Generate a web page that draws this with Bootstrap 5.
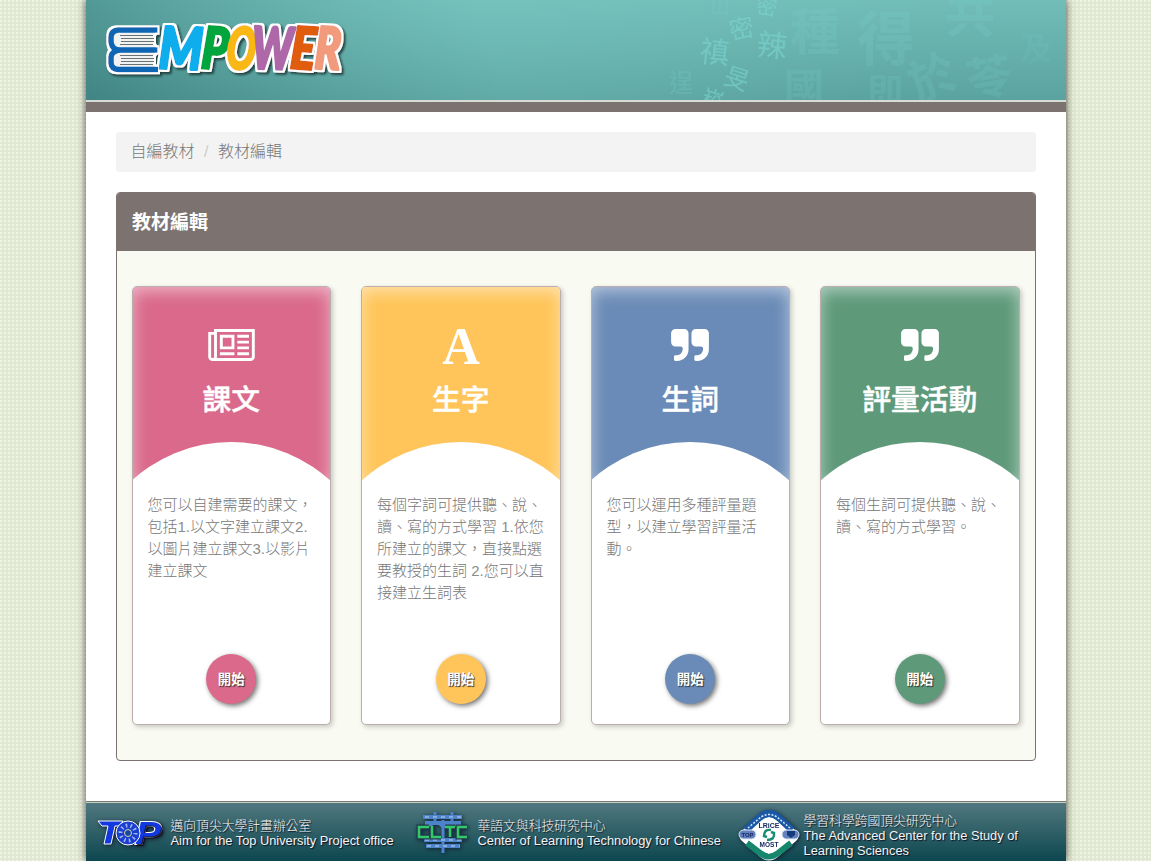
<!DOCTYPE html>
<html lang="zh-Hant">
<head>
<meta charset="utf-8">
<meta name="viewport" content="width=device-width, initial-scale=1">
<title>EMPOWER 教材編輯</title>
<link href="https://cdn.jsdelivr.net/npm/bootstrap@5.3.0/dist/css/bootstrap.min.css" rel="stylesheet">
<style>
body{font-family:"Liberation Sans","Noto Sans CJK TC",sans-serif;font-size:15px;line-height:22px;color:#777;overflow:hidden;
 background:conic-gradient(from 0deg at 2px 2px,#e0e8d2 0 75%,#f0f4e7 0) 0 0/4px 4px}
.page{width:980px;height:861px;background:#fff;box-shadow:0 0 8px rgba(60,55,45,.9)}
.top-banner{height:112px;border-bottom:10px solid #7c7371;background:#d6dcd6}
.banner-art{height:100px;background:radial-gradient(ellipse 480px 190px at 370px -10px,rgba(120,198,192,.5),transparent),linear-gradient(75deg,rgba(35,100,100,.5),transparent 42%),linear-gradient(#72bdb8,#5ba3a0)}
.banner-art svg{display:block}
.logo-letters text{font-family:Lato,"Liberation Sans",sans-serif;font-weight:900;font-style:italic;font-size:58px;stroke-width:3px;stroke-linejoin:round}
.ink text{font-family:"Noto Sans CJK TC",sans-serif;fill:#7edcd8}
.breadcrumb{height:40px;background:#f3f3f3;border-radius:4px;padding:8px 15px;font-size:16px;line-height:24px;font-weight:300;margin-bottom:20px;--bs-breadcrumb-divider-color:#ccc;--bs-breadcrumb-item-padding-x:9.5px;--bs-breadcrumb-item-active-color:#777}
.breadcrumb-item a{color:#777}
.editor{height:569px;border:1px solid #7c7371;border-radius:4px;background:#f9faf1;overflow:hidden}
.editor-title{height:58px;background:#7c7371;color:#fff;font-size:19px;font-weight:700;line-height:60px;padding-left:15.5px}
.tile-col{padding:0 15px}
.tiles{padding-top:35px}
.tile{height:439px;border:1px solid #bcaeae;border-radius:5px;background:#fff;box-shadow:2px 2px 5px rgba(0,0,0,.2);overflow:hidden}
.tile-top{height:194px;position:relative;overflow:hidden;background:var(--tone);color:#fff;box-shadow:inset 0 4px 16px rgba(255,255,255,.52);padding-top:42px}
.tile-top::after{content:"";position:absolute;left:50%;top:155px;width:294px;height:294px;margin-left:-147px;border-radius:50%;background:#fff}
.tile-top svg{display:block;margin:0 auto;height:32px}
.tile-top h3{font-size:28.8px;font-weight:500;line-height:40px;margin:19px 0 0;-webkit-text-stroke:.4px #fff}
.tile p{height:158px;margin:0;padding:13px 14px 0 15px;font-weight:300;color:#777;line-height:22px;word-break:break-all;text-align:left}
.tile p i{font-style:normal;color:#8c8c8c}
.btn-start{width:50px;height:50px;border-radius:50%;background:var(--tone);color:#fff;font-size:13.5px;line-height:51px;font-weight:700;padding:0;border:0;text-shadow:1px 1px 1px #333;box-shadow:2px 2px 5px rgba(0,0,0,.55);margin-top:15px}
.pink{--tone:#da698b}.gold{--tone:#ffc55a}.blue{--tone:#6a8bb7}.green{--tone:#5e9a7a}
.foot{height:60px;border-top:1px solid #77796e;background:linear-gradient(#527880,#0d474f);box-shadow:inset 0 1px #c9cfc5;color:#f4f4f4;font-size:12.82px;line-height:15px;text-shadow:1px 1px 1px #112}
.foot svg{filter:drop-shadow(1px 1px 2px #123);flex:none}
.foot .f1{width:319px;padding-left:11px;padding-top:2px}.foot .f2{width:333px;padding-left:11px;padding-top:2px}.foot .f3{padding-top:8px}
.foot span{display:block;font-size:12.8px;font-weight:300}
</style>
</head>
<body>
<div class="page mx-auto d-flex flex-column">
<header class="top-banner"><div class="banner-art">
<svg width="980" height="100" viewBox="86 0 980 100">
<defs><filter id="sh" x="-10%" y="-15%" width="125%" height="140%"><feMorphology in="SourceAlpha" operator="dilate" radius="1.6" result="fat"/><feGaussianBlur in="fat" stdDeviation=".4" result="edge"/><feFlood flood-color="#fff"/><feComposite in2="edge" operator="in" result="rim"/><feMerge result="all"><feMergeNode in="rim"/><feMergeNode in="SourceGraphic"/></feMerge><feDropShadow in="all" dx="2" dy="2" stdDeviation="1.3" flood-color="#122" flood-opacity=".75"/></filter></defs>
<g class="ink">
<g opacity=".5"><text x="756" y="14" font-size="21" transform="rotate(8 765 8)">密</text><text x="729" y="38" font-size="25" transform="rotate(-12 740 28)">密</text><text x="757" y="56" font-size="30" transform="rotate(6 770 45)">辣</text><text x="700" y="63" font-size="30" transform="rotate(6 715 50)">禛</text><text x="724" y="88" font-size="25" transform="rotate(18 738 80)">旻</text><text x="703" y="106" font-size="22" transform="rotate(18 710 95)">崧</text><text x="669" y="92" font-size="25" opacity=".4">逞</text></g>
<g opacity=".15" font-weight="700"><text x="790" y="50" font-size="50">種</text><text x="857" y="60" font-size="58">得</text><text x="945" y="32" font-size="50">共</text><text x="784" y="102" font-size="40">國</text><text x="867" y="105" font-size="36">即</text><text x="910" y="94" font-size="48" transform="rotate(-24 935 80)">於</text><text x="966" y="94" font-size="46" transform="rotate(-10 990 75)">苓</text><text x="1020" y="60" font-size="32" opacity=".6">及</text><text x="710" y="14" font-size="20">山</text></g>
</g>
<g filter="url(#sh)">
<path d="M157 29H118Q110 30 110 38V43L114 50L110 57V64Q111 71 118 71H157L153 64V56L157 50L153 44V36Z" fill="#f1f3f3"/>
<path d="M120 35.500H153M121 38.500H154M121 41.500H154M120 44.500H153M120 55.500H153M121 58.500H154M121 61.500H154M120 64.500H153" stroke="#6a7173" stroke-width="1.100"/>
<path d="M157.500 30H118Q111 31 111 37V42Q112 50 120 50H157.500M120 50Q111.500 51 111 57V63Q111.500 69.500 119 69.500H158" fill="none" stroke="#0865b4" stroke-width="5.500"/>
<g class="logo-letters">
<text x="159" y="69" textLength="44" lengthAdjust="spacingAndGlyphs" fill="#0daeeb" stroke="#0daeeb" transform="rotate(2 180 48)">M</text>
<text x="202" y="69" textLength="27" lengthAdjust="spacingAndGlyphs" fill="#00a63e" stroke="#00a63e" transform="rotate(4 215 48)">P</text>
<text x="227" y="69" textLength="29" lengthAdjust="spacingAndGlyphs" fill="#f9b812" stroke="#f9b812" transform="rotate(5 241 48)">O</text>
<text x="252" y="69" textLength="41" lengthAdjust="spacingAndGlyphs" fill="#ae68a9" stroke="#ae68a9" transform="rotate(2 273 48)">W</text>
<text x="291" y="69" textLength="25" lengthAdjust="spacingAndGlyphs" fill="#e05d0c" stroke="#e05d0c" transform="rotate(4 304 48)">E</text>
<text x="315" y="69" textLength="26" lengthAdjust="spacingAndGlyphs" fill="#f29a7b" stroke="#f29a7b" transform="rotate(3 330 48)">R</text>
</g></g>
</svg></div></header>
<main class="flex-grow-1" style="padding:20px 30px 0">
<nav><ol class="breadcrumb"><li class="breadcrumb-item"><a class="text-decoration-none" href="#">自編教材</a></li><li class="breadcrumb-item active">教材編輯</li></ol></nav>
<section class="editor">
<h2 class="editor-title m-0">教材編輯</h2>
<div class="row gx-0 tiles">
<div class="col-3 tile-col"><article class="tile pink text-center"><div class="tile-top"><svg viewBox="0 128 2048 1408" width="47"><path fill="#fff" fill-rule="evenodd" d="M1024 512H640v384h384V512zm128 640v128H512v-128h640zm0-768v640H512V384h640zm640 768v128h-512v-128h512zm0-256v128h-512V896h512zm0-256v128h-512V640h512zm0-256v128h-512V384h512zM256 1344V384H128v960q0 26 19 45t45 19 45-19 19-45zm1664 0V256H384v1088q0 33-11 64h1483q26 0 45-19t19-45zm128-1216v1216q0 80-56 136t-136 56H192q-80 0-136-56T0 1344V256h256V128z"/></svg><h3>課文</h3></div><p>您可以自建需要的課文，包括<i>1.</i>以文字建立課文<i>2.</i>以圖片建立課文<i>3.</i>以影片建立課文</p><button class="btn-start">開始</button></article></div>
<div class="col-3 tile-col"><article class="tile gold text-center"><div class="tile-top"><svg viewBox="0 0 40 32" width="40" overflow="visible"><text x="20" y="35" text-anchor="middle" fill="#fff" font-family="Liberation Serif,serif" font-weight="700" font-size="52">A</text></svg><h3>生字</h3></div><p>每個字詞可提供聽、說、讀、寫的方式學習 <i>1.</i>依您所建立的課文，直接點選要教授的生詞 <i>2.</i>您可以直接建立生詞表</p><button class="btn-start">開始</button></article></div>
<div class="col-3 tile-col"><article class="tile blue text-center"><div class="tile-top"><svg viewBox="0 128 1664 1408" width="38"><path id="quote" fill="#fff" d="M768 320v704q0 104-40.500 198.500T618 1386t-163.500 109.500T256 1536h-64q-26 0-45-19t-19-45v-128q0-26 19-45t45-19h64q106 0 181-75t75-181v-32q0-40-28-68t-68-28H192q-80 0-136-56T0 704V320q0-80 56-136t136-56h384q80 0 136 56t56 136zM1664 320v704q0 104-40.500 198.500T1514 1386t-163.500 109.500T1152 1536h-64q-26 0-45-19t-19-45v-128q0-26 19-45t45-19h64q106 0 181-75t75-181v-32q0-40-28-68t-68-28h-224q-80 0-136-56t-56-136V320q0-80 56-136t136-56h384q80 0 136 56t56 136z"/></svg><h3>生詞</h3></div><p>您可以運用多種評量題型，以建立學習評量活動。</p><button class="btn-start">開始</button></article></div>
<div class="col-3 tile-col"><article class="tile green text-center"><div class="tile-top"><svg viewBox="0 128 1664 1408" width="38"><use href="#quote"/></svg><h3>評量活動</h3></div><p>每個生詞可提供聽、說、讀、寫的方式學習。</p><button class="btn-start">開始</button></article></div>
</div></section></main>
<footer class="foot d-flex">
<div class="f1 d-flex align-items-center"><svg width="66" height="32" viewBox="0 0 66 32" class="me-2"><g font-family="Liberation Sans" font-weight="700" font-style="italic" font-size="32" fill="#1238e0" stroke="#fff" stroke-width="2" paint-order="stroke"><text x="38" y="27" textLength="26" lengthAdjust="spacingAndGlyphs">P</text></g><path d="M1 4H26L23 9H18L14 27H7L11 9H5Z" fill="#1238e0" stroke="#fff"/><circle cx="31" cy="16" r="12" fill="#1a3fd0" stroke="#fff"/><circle cx="31" cy="16" r="7.500" fill="none" stroke="#9fb6f4" stroke-width="4" stroke-dasharray="1.500 3.200"/><circle cx="31" cy="16" r="3.500" fill="#1746a6" stroke="#d8d5a8"/></svg><div><span>邁向頂尖大學計畫辦公室</span>Aim for the Top University Project office</div></div>
<div class="f2 d-flex align-items-center"><svg width="54" height="44" viewBox="0 0 54 44" style="margin-right:8px"><g fill="none" stroke="#4c83c9" stroke-width="4"><path d="M7 6H46M9 12H45M8 29H46M10 35H44" /><path d="M19 1V14M36 1V14M27 9V42" stroke-width="3"/></g><path d="M13 16Q20 8 27 16Q35 8 42 16" fill="none" stroke="#4c83c9" stroke-width="3"/><path d="M9 29H45M11 35H44M9 6H45" stroke="#9bbce5" stroke-width="1.500" stroke-dasharray="4 4" fill="none"/><path d="M13 16H3V26H13M16 15V26H25M29 16H39M34 16V26M51 16H42V26H51" stroke="#22384d" stroke-width="5" fill="none"/><path d="M13 16H3V26H13M16 15V26H25M29 16H39M34 16V26M51 16H42V26H51" stroke="#32c768" stroke-width="2.500" fill="none"/></svg><div><span>華語文與科技研究中心</span>Center of Learning Technology for Chinese</div></div>
<div class="f3 d-flex"><svg width="62" height="52" viewBox="0 0 62 52" style="margin-right:4px"><path d="M31 1Q37 0 42 6L58 21Q63 26 58 31L42 45Q31 56 20 45L4 31Q-1 26 4 21L20 6Q25 1 31 1Z" fill="#fff"/><path d="M8 20L21 8Q31-1 41 8L54 20" fill="none" stroke="#1858a5" stroke-width="7"/><path d="M9 33L22 43Q31 50 40 43L53 33" fill="none" stroke="#16866c" stroke-width="6"/><path d="M10 18L23 7Q31 2 39 7L52 18" fill="none" stroke="#d8e6ff" stroke-width="1.500" stroke-dasharray="2 1.500"/><path d="M31 7L52 26L31 44L10 26Z" fill="#fff"/><rect x="1" y="20" width="17" height="9" rx="4.500" fill="#6381bc" stroke="#dce5f5"/><rect x="44" y="20" width="17" height="9" rx="4.500" fill="#6381bc" stroke="#dce5f5"/><path d="M49 21H57V25L53 28L49 25Z" fill="#123b78"/><g font-family="Liberation Sans" font-weight="700" fill="#172b67" text-anchor="middle" style="text-shadow:none"><text x="9.500" y="27" font-size="6">TOP</text><text x="31" y="37" font-size="6.500">MOST</text><text x="31" y="18" font-size="7">LRiCE</text></g><path d="M33 20Q26 19 26 26L29 27M29 30Q37 30 36 23L33 22" stroke="#178d71" stroke-width="2.500" fill="none"/></svg><div style="padding-top:2.500px"><span>學習科學跨國頂尖研究中心</span>The Advanced Center for the Study of<br>Learning Sciences</div></div>
</footer>
</div>
<script src="https://cdn.jsdelivr.net/npm/bootstrap@5.3.0/dist/js/bootstrap.bundle.min.js"></script>
</body>
</html>
